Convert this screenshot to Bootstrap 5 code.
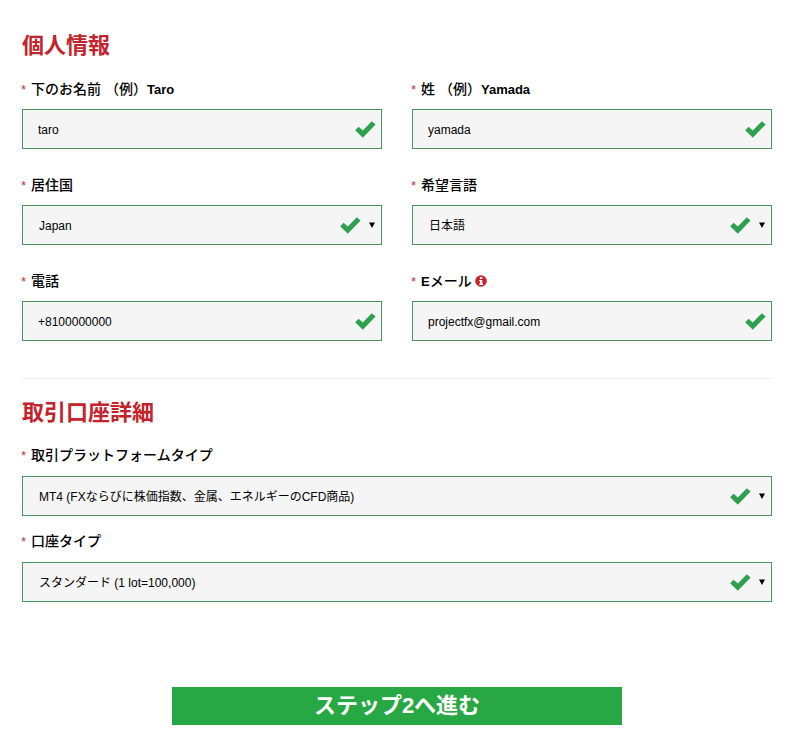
<!DOCTYPE html>
<html lang="ja">
<head>
<meta charset="utf-8">
<title>個人情報</title>
<link href="https://cdn.jsdelivr.net/npm/bootstrap@5.3.0/dist/css/bootstrap.min.css" rel="stylesheet">
<style>
body{font-family:"Liberation Sans","Noto Sans CJK JP",sans-serif;color:#000;background:#fff;}
.page-wrap{padding:33px 19px 12px 22px;}
.sec-title{font-size:22px;line-height:25px;font-weight:700;color:#c3232b;margin:0 0 22px;}
.sec-title-b{margin-bottom:21px;}
.two-col{display:grid;grid-template-columns:360px 360px;column-gap:30px;row-gap:27px;}
.one-col{display:grid;grid-template-columns:1fr;row-gap:16px;}
.one-col .fld-label{margin-bottom:11px;}
.fld-label{display:block;height:20px;font-size:14px;line-height:20px;font-weight:500;margin:-1px 0 10px -1px;white-space:pre;}
.fld-label b{font-size:13px;font-weight:700;line-height:1;}
.req{color:#b0383c;font-weight:400;font-size:13px;line-height:1;margin-right:5px;}
.info-dot{display:inline-block;vertical-align:-1px;margin-left:-1px;}
.fld-box{height:40px;border:1px solid #4b9560;background:#f5f5f5;}
.fld-box .form-control,.fld-box .form-select{flex:1 1 auto;min-width:0;height:38px;border:0;border-radius:0;background:transparent;box-shadow:none;font-size:12px;color:#000;padding:1px 0 0 15px;font-family:inherit;}
.fld-box .form-select{padding-left:16px;appearance:none;-webkit-appearance:none;background-image:none;}
.tick{flex:none;margin-right:5px;}
.sel-tick{margin-right:8px;}
.caret{flex:none;width:6px;height:6px;margin-right:6px;}
.sep{border:0;border-top:1px solid #eeeeee;opacity:1;margin:37px 0 21px;}
.go-row{margin-top:85px;}
.go-btn{width:450px;height:38px;padding:0;background:#28a745;border:0;border-radius:0;color:#fff;font-size:22px;line-height:36px;font-weight:700;}
.go-btn:hover{background:#28a745;color:#fff;}
</style>
</head>
<body>
<svg width="0" height="0" class="d-block" aria-hidden="true">
<defs>
<symbol id="ck" viewBox="0 0 21 17"><path d="M0.2 9.2 L3.6 5.8 L7.8 9.4 L16.8 0.2 L20.6 3.4 L7.8 16.8 Z" fill="#2ea04f"/></symbol>
<symbol id="ca" viewBox="0 0 6 6"><path d="M0 0.5H6L3 6Z" fill="#000"/></symbol>
</defs>
</svg>
<main class="page-wrap">
<form>
<h2 class="sec-title">個人情報</h2>
<div class="two-col">
<div>
<label class="fld-label" for="f1"><span class="req">*</span>下のお名前 （例）<b>Taro</b></label>
<div class="fld-box d-flex align-items-center"><input id="f1" class="form-control" type="text" value="taro"><svg class="tick" width="21" height="17"><use href="#ck"/></svg></div>
</div>
<div>
<label class="fld-label" for="f2"><span class="req">*</span>姓 （例）<b>Yamada</b></label>
<div class="fld-box d-flex align-items-center"><input id="f2" class="form-control" type="text" value="yamada"><svg class="tick" width="21" height="17"><use href="#ck"/></svg></div>
</div>
<div>
<label class="fld-label" for="f3"><span class="req">*</span>居住国</label>
<div class="fld-box d-flex align-items-center"><select id="f3" class="form-select"><option>Japan</option></select><svg class="tick sel-tick" width="21" height="17"><use href="#ck"/></svg><svg class="caret"><use href="#ca"/></svg></div>
</div>
<div>
<label class="fld-label" for="f4"><span class="req">*</span>希望言語</label>
<div class="fld-box d-flex align-items-center"><select id="f4" class="form-select"><option>日本語</option></select><svg class="tick sel-tick" width="21" height="17"><use href="#ck"/></svg><svg class="caret"><use href="#ca"/></svg></div>
</div>
<div>
<label class="fld-label" for="f5"><span class="req">*</span>電話</label>
<div class="fld-box d-flex align-items-center"><input id="f5" class="form-control" type="text" value="+8100000000"><svg class="tick" width="21" height="17"><use href="#ck"/></svg></div>
</div>
<div>
<label class="fld-label" for="f6"><span class="req">*</span><b>E</b>メール <svg class="info-dot" width="12" height="12" viewBox="0 0 12 12"><circle cx="6" cy="6" r="5.8" fill="#c3232b"/><rect x="4.9" y="2" width="2.4" height="2" fill="#fff"/><path d="M4.2 4.9H7.3V8.6H8.1V10H4.2V8.6H5V6.3H4.2Z" fill="#fff"/></svg></label>
<div class="fld-box d-flex align-items-center"><input id="f6" class="form-control" type="text" value="projectfx@gmail.com"><svg class="tick" width="21" height="17"><use href="#ck"/></svg></div>
</div>
</div>
<hr class="sep">
<h2 class="sec-title sec-title-b">取引口座詳細</h2>
<div class="one-col">
<div>
<label class="fld-label" for="f7"><span class="req">*</span>取引プラットフォームタイプ</label>
<div class="fld-box d-flex align-items-center"><select id="f7" class="form-select"><option>MT4 (FXならびに株価指数、金属、エネルギーのCFD商品)</option></select><svg class="tick sel-tick" width="21" height="17"><use href="#ck"/></svg><svg class="caret"><use href="#ca"/></svg></div>
</div>
<div>
<label class="fld-label" for="f8"><span class="req">*</span>口座タイプ</label>
<div class="fld-box d-flex align-items-center"><select id="f8" class="form-select"><option>スタンダード (1 lot=100,000)</option></select><svg class="tick sel-tick" width="21" height="17"><use href="#ck"/></svg><svg class="caret"><use href="#ca"/></svg></div>
</div>
</div>
<div class="go-row text-center"><button type="button" class="btn go-btn">ステップ2へ進む</button></div>
</form>
</main>
<script src="https://cdn.jsdelivr.net/npm/bootstrap@5.3.0/dist/js/bootstrap.bundle.min.js"></script>
</body>
</html>
